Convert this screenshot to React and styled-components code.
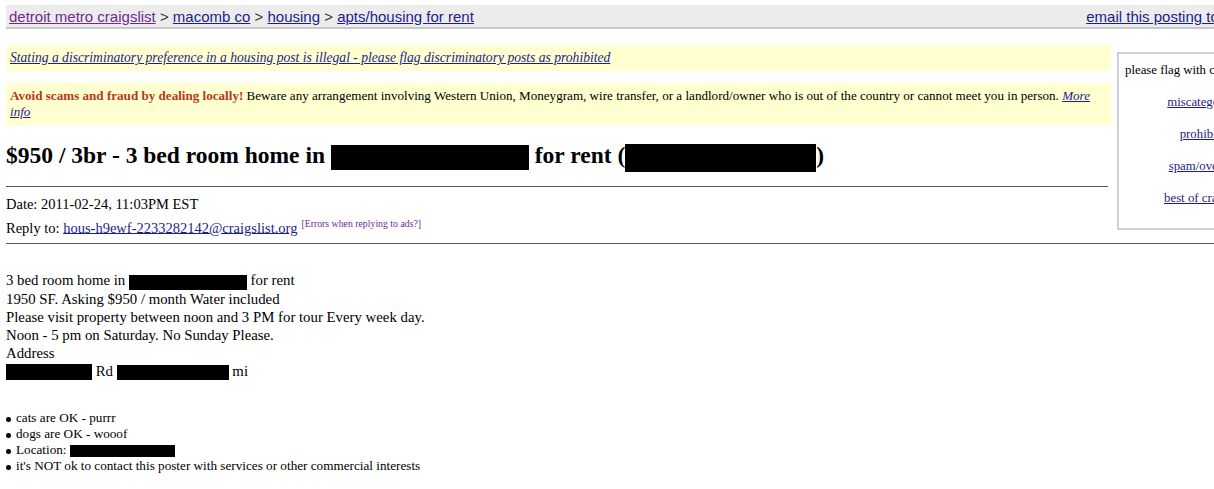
import React from 'react';
import styled, { createGlobalStyle } from 'styled-components';

const GlobalStyle = createGlobalStyle`
  html, body {
    margin: 0;
    padding: 0;
    overflow: hidden;
    background: #fff;
  }
  body {
    font-family: "Liberation Serif", "Times New Roman", serif;
    font-size: 14px;
    color: #000;
  }
`;

const Page = styled.div`
  width: 1271px;
  padding: 5px 0 0 6px;
`;

const Crumbs = styled.div`
  display: flex;
  justify-content: space-between;
  align-items: center;
  height: 22px;
  padding: 0 4px 0 3px;
  background: #ececec;
  border-bottom: 2px solid #c8c8c8;
  font-family: "Liberation Sans", Arial, sans-serif;
  font-size: 15px;
  color: #333;
`;

const Link = styled.a`
  color: ${p => (p.$visited ? '#6e2a92' : '#1d1d8c')};
  text-decoration: underline;
`;

const Top = styled.div`
  display: flex;
  align-items: flex-start;
  gap: 6px;
  margin-top: 16px;
`;

const Main = styled.div`
  flex: none;
  width: 1105px;
  display: flex;
  flex-direction: column;
`;

const Notice = styled.div`
  background: #ffffcf;
  padding: 5px 4px;
  font-size: ${p => p.$size || '13.6px'};
  line-height: 16px;
  margin-bottom: 12px;
`;

const Italic = styled(Link)`
  font-style: italic;
`;

const Warn = styled.b`
  color: #b8361c;
`;

const Title = styled.h2`
  margin: 3px 0 0;
  font-size: 23.5px;
  line-height: 30px;
  font-weight: bold;
  white-space: nowrap;
`;

const Redact = styled.span`
  display: inline-block;
  background: #000;
  width: ${p => p.$w}px;
  height: ${p => p.$h}px;
  vertical-align: middle;
`;

const Rule = styled.hr`
  margin: ${p => p.$m || '0'};
  border: 0;
  border-top: 1px solid #555;
  height: 0;
  width: ${p => p.$w || '100%'};
`;

const Meta = styled.div`
  font-size: 14.5px;
  line-height: ${p => p.$lh || '18px'};
  margin: ${p => p.$m || '0'};
  white-space: nowrap;
`;

const Sup = styled.sup`
  font-size: 9.8px;
  margin-left: 4px;
  a {
    color: #6e2a92;
  }
`;

const Flags = styled.div`
  flex: none;
  margin-top: 7px;
  width: 162px;
  height: 165px;
  border: 2px solid #d0d0d0;
  padding: 9px 0 0 6px;
  font-size: 12.8px;
  white-space: nowrap;
`;

const FlagList = styled.div`
  display: flex;
  flex-direction: column;
  align-items: center;
  gap: 18px;
  margin-top: 17px;
  line-height: 14px;
`;

const Body = styled.div`
  margin-top: 27px;
  font-size: 14.8px;
  line-height: 18px;
`;

const Bullets = styled.ul`
  margin: 30px 0 0;
  padding: 0 0 0 10px;
  font-size: 13.2px;
  line-height: 16px;
  list-style: none;

  li {
    position: relative;
  }
  li::before {
    content: '';
    position: absolute;
    left: -10px;
    top: 7px;
    width: 5px;
    height: 5px;
    border-radius: 50%;
    background: #000;
  }
`;

export default function App() {
  return (
    <Page>
      <GlobalStyle />
      <Crumbs>
        <span>
          <Link $visited>detroit metro craigslist</Link> &gt; <Link>macomb co</Link> &gt;{' '}
          <Link>housing</Link> &gt; <Link>apts/housing for rent</Link>
        </span>
        <Link>email this posting to a friend</Link>
      </Crumbs>

      <Top>
        <Main>
          <Notice>
            <Italic>
              Stating a discriminatory preference in a housing post is illegal - please flag
              discriminatory posts as prohibited
            </Italic>
          </Notice>
          <Notice $size="13.1px">
            <Warn>Avoid scams and fraud by dealing locally!</Warn> Beware any arrangement
            involving Western Union, Moneygram, wire transfer, or a landlord/owner who is out of
            the country or cannot meet you in person. <Italic>More info</Italic>
          </Notice>
          <Title>
            $950 / 3br - 3 bed room home in <Redact $w={198} $h={25} /> for rent (
            <Redact $w={191} $h={28} />)
          </Title>
          <Rule $m="14px 0 0" $w="1102px" />
          <Meta $m="8px 0 0">Date: 2011-02-24, 11:03PM EST</Meta>
          <Meta $lh="22px">
            Reply to: <Link>hous-h9ewf-2233282142@craigslist.org</Link>
            <Sup>
              <a>[Errors when replying to ads?]</a>
            </Sup>
          </Meta>
        </Main>
        <Flags>
          please flag with care:
          <FlagList>
            <Link>miscategorized</Link>
            <Link>prohibited</Link>
            <Link>spam/overpost</Link>
            <Link>best of craigslist</Link>
          </FlagList>
        </Flags>
      </Top>

      <Rule $m="5px 0 0" />

      <Body>
        3 bed room home in <Redact $w={118} $h={15} /> for rent
        <br />
        1950 SF. Asking $950 / month Water included
        <br />
        Please visit property between noon and 3 PM for tour Every week day.
        <br />
        Noon - 5 pm on Saturday. No Sunday Please.
        <br />
        Address
        <br />
        <Redact $w={86} $h={16} /> Rd <Redact $w={112} $h={15} /> mi
      </Body>

      <Bullets>
        <li>cats are OK - purrr</li>
        <li>dogs are OK - wooof</li>
        <li>
          Location: <Redact $w={105} $h={12} />
        </li>
        <li>it's NOT ok to contact this poster with services or other commercial interests</li>
      </Bullets>
    </Page>
  );
}
